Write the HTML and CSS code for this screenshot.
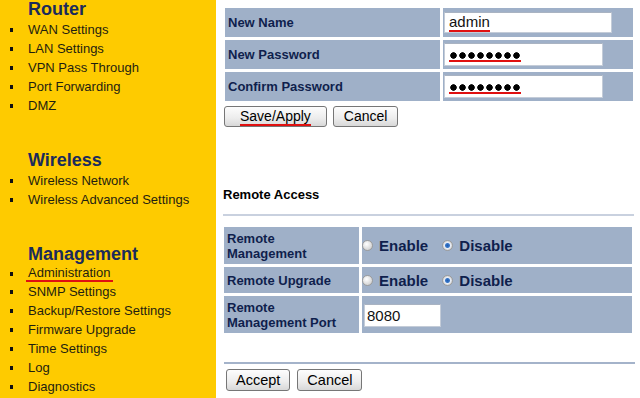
FILE: index.html
```html
<!DOCTYPE html>
<html lang="en">

<head>
    <link rel="stylesheet" href="styles.css">
</head>

<body>
    <div class="page">
        <div class="sidebar">
            <h2>Router</h2>
            <ul>
                <li>WAN Settings</li>
                <li>LAN Settings</li>
                <li>VPN Pass Through</li>
                <li>Port Forwarding</li>
                <li>DMZ</li>
            </ul>
            <h2 class="section">Wireless</h2>
            <ul>
                <li>Wireless Network</li>
                <li>Wireless Advanced Settings</li>
            </ul>
            <h2 class="section">Management</h2>
            <ul>
                <li><span class="mark mark-nav">Administration</span></li>
                <li>SNMP Settings</li>
                <li>Backup/Restore Settings</li>
                <li>Firmware Upgrade</li>
                <li>Time Settings</li>
                <li>Log</li>
                <li>Diagnostics</li>
            </ul>
        </div>

        <div class="main">
            <table class="form-table account">
                <tr>
                    <td class="label">New Name</td>
                    <td class="value">
                        <div class="field field-name"><span class="mark">admin</span></div>
                    </td>
                </tr>
                <tr>
                    <td class="label">New Password</td>
                    <td class="value">
                        <div class="field field-pass"><span class="dots mark"></span></div>
                    </td>
                </tr>
                <tr>
                    <td class="label">Confirm Password</td>
                    <td class="value">
                        <div class="field field-pass"><span class="dots mark"></span></div>
                    </td>
                </tr>
            </table>
            <div class="buttons top-buttons">
                <button class="btn btn-save"><span class="mark">Save/Apply</span></button>
                <button class="btn">Cancel</button>
            </div>

            <h3>Remote Access</h3>
            <div class="divider"></div>

            <table class="form-table remote">
                <tr class="tall">
                    <td class="label">Remote<br>Management</td>
                    <td class="value radios">
                        <input type="radio" name="rm" id="rm1"><label for="rm1">Enable</label>
                        <input type="radio" name="rm" id="rm2" checked><label for="rm2">Disable</label>
                    </td>
                </tr>
                <tr class="short">
                    <td class="label">Remote Upgrade</td>
                    <td class="value radios">
                        <input type="radio" name="ru" id="ru1"><label for="ru1">Enable</label>
                        <input type="radio" name="ru" id="ru2" checked><label for="ru2">Disable</label>
                    </td>
                </tr>
                <tr class="tall">
                    <td class="label">Remote<br>Management Port</td>
                    <td class="value">
                        <input class="port" type="text" value="8080">
                    </td>
                </tr>
            </table>
            <div class="divider divider-dark"></div>
            <div class="buttons bottom-buttons">
                <button class="btn btn-accept">Accept</button>
                <button class="btn btn-accept">Cancel</button>
            </div>
        </div>
    </div>
</body>

</html>
```

FILE: styles.css
```css
body {
    margin: 0;
    padding: 0;
    font-family: "Liberation Sans", Arial, sans-serif;
    background: white;
}

.page {
    display: flex;
    min-height: 398px;
}

/* left menu */
.sidebar {
    width: 216px;
    flex-shrink: 0;
    background-color: #fecb00;
    min-height: 398px;
}

.sidebar h2 {
    margin: 0 0 2px 28px;
    font-size: 18px;
    line-height: 18px;
    color: #1b2b5b;
}

.sidebar h2.section {
    margin-top: 36px;
}

.sidebar ul {
    list-style: none;
    margin: 0;
    padding: 0 0 0 10px;
}

.sidebar li {
    display: flex;
    align-items: center;
    font-size: 13px;
    line-height: 19px;
    color: #1e1e10;
}

.sidebar li::before {
    content: "";
    width: 3px;
    height: 4px;
    background: #111;
    margin-right: 15px;
}

/* red marks */
.mark {
    border-bottom: 2px solid #e01010;
}

.mark-nav {
    padding: 0 3px 0 2px;
    margin-left: -2px;
    line-height: 15px;
}

/* content */
.main {
    padding: 5px 0 0 6px;
    display: flex;
    flex-direction: column;
}

.form-table {
    border-collapse: separate;
    border-spacing: 3px;
    width: 414px;
}

.form-table td {
    background-color: #9fb0c8;
    padding: 0;
    vertical-align: middle;
}

.form-table .label {
    font-size: 13px;
    font-weight: bold;
    line-height: 15px;
    color: #0f1f4d;
    padding-left: 3px;
}

.account tr {
    height: 29px;
}

.account .label {
    width: 212px;
}

.account .value {
    padding-left: 1px;
}

.field {
    background: white;
    border: 1px solid #c4ccd8;
    border-top-color: #a9b3c2;
    box-sizing: border-box;
    display: flex;
    align-items: center;
    padding-left: 4px;
    font-size: 15px;
    color: #111;
}

.field-name {
    width: 168px;
    height: 21px;
    line-height: 16px;
}

.field-pass {
    width: 159px;
    height: 23px;
}

.dots {
    display: inline-block;
    width: 72px;
    height: 9px;
    margin-top: 3px;
    background: radial-gradient(circle at 4.5px 4.5px, #000 2.9px, transparent 3.6px) 0 0 / 9px 9px repeat-x;
}

.buttons {
    display: flex;
    gap: 6px;
}

.top-buttons {
    margin: 2px 0 0 2px;
}

.btn {
    font-family: "Liberation Sans", Arial, sans-serif;
    font-size: 14px;
    color: #000;
    height: 21px;
    padding: 0 10px;
    background: linear-gradient(#fdfdfd, #ececec 60%, #d8d8d8);
    border: 1px solid #767676;
    border-radius: 3px;
    line-height: 17px;
}

.btn-save {
    padding: 0 15px;
}

h3 {
    margin: 60px 0 0 1px;
    font-size: 13px;
    line-height: 16px;
    color: #000;
}

.divider {
    height: 2px;
    width: 411px;
    margin: 11px 0 0 1px;
    background: #c9d1df;
}

.remote {
    margin: 8px 0 0 -1px;
}

.remote .label {
    width: 132px;
}

.remote tr.tall {
    height: 37px;
}

.remote tr.short {
    height: 26px;
}

.radios {
    padding-left: 10px;
    font-size: 15px;
    font-weight: bold;
    color: #0f1f4d;
}

.radios input {
    appearance: none;
    -webkit-appearance: none;
    width: 11px;
    height: 11px;
    margin: 0 6px 0 0;
    border-radius: 50%;
    border: 1px solid #9c9c9c;
    background: radial-gradient(circle at 40% 35%, #ffffff, #d6d6d6 70%, #b0b0b0);
    vertical-align: 0;
}

.radios input:checked {
    background: radial-gradient(circle, #1f5bb0 0, #3a78c8 2px, #e8eef8 3px, #d6d6d6 70%, #b0b0b0);
}

.radios label + input {
    margin-left: 10px;
}

.remote .value .port {
    margin: 1px 0 0 2px;
    width: 77px;
    height: 23px;
    box-sizing: border-box;
    border: 1px solid #c4ccd8;
    border-top-color: #a9b3c2;
    padding: 0 2px;
    font-family: "Liberation Sans", Arial, sans-serif;
    font-size: 15px;
    color: #111;
}

.divider-dark {
    margin: 26px 0 0 2px;
    background: #a4b3ca;
}

.bottom-buttons {
    margin: 5px 0 0 4px;
    gap: 7px;
}

.btn-accept {
    height: 22px;
    font-size: 14.5px;
    padding: 0 9px;
}
```
